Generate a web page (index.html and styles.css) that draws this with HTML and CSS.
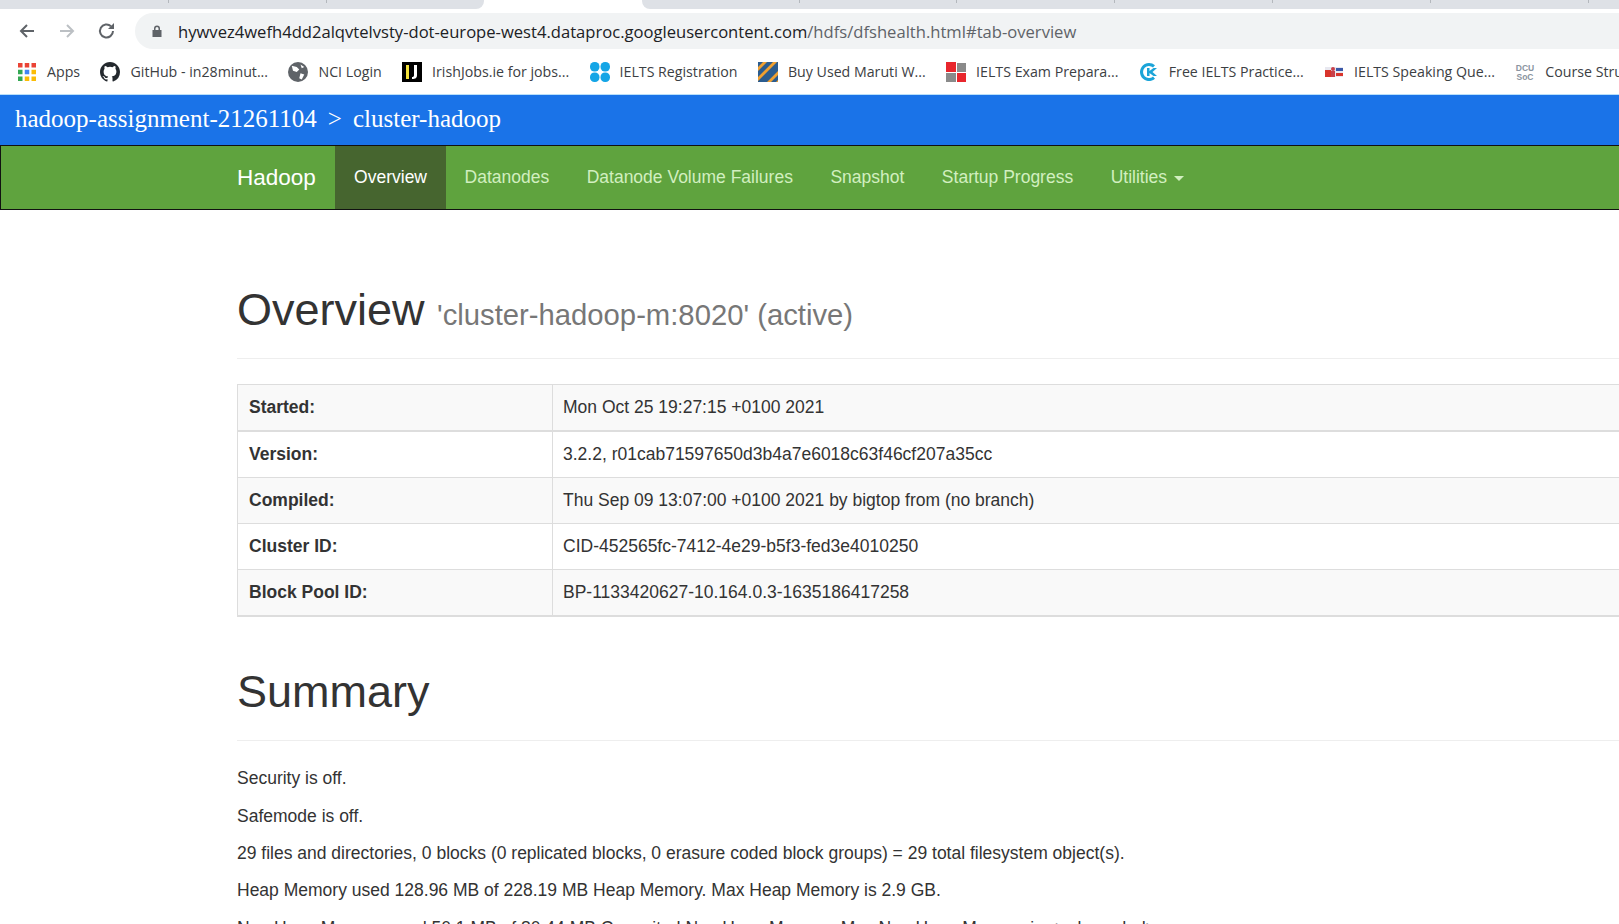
FILE: index.html
```html
<!DOCTYPE html>
<html lang="en">
<head>
    <meta charset="UTF-8">
    <title>Namenode information</title>
    <link rel="stylesheet" href="styles.css">
</head>
<body>

    <!-- Tab strip -->
    <div class="tabstrip">
        <div class="tab-gray tab-left">
            <span class="tab-sep"></span><span class="tab-sep"></span>
        </div>
        <div class="tab-active"></div>
        <div class="tab-gray tab-right">
            <span class="tab-sep"></span><span class="tab-sep"></span><span class="tab-sep"></span>
            <span class="tab-sep"></span><span class="tab-sep"></span><span class="tab-sep"></span>
        </div>
    </div>

    <!-- Address bar -->
    <div class="toolbar">
        <svg class="nav-icon" viewBox="0 0 20 20"><path d="M17 10H4M10 4l-6 6 6 6" fill="none" stroke="#5f6368" stroke-width="2"/></svg>
        <svg class="nav-icon" viewBox="0 0 20 20"><path d="M3 10h13M10 4l6 6-6 6" fill="none" stroke="#bcc0c4" stroke-width="2"/></svg>
        <svg class="nav-icon" viewBox="0 0 20 20"><path d="M16 10a6.5 6.5 0 1 1-2-4.700" fill="none" stroke="#5f6368" stroke-width="2"/><path d="M17 2v6h-6z" fill="#5f6368"/></svg>
        <div class="omnibox">
            <svg class="lock" viewBox="0 0 12 14"><path d="M3 6V4.500a3 3 0 0 1 6 0V6h1.500v7h-9V6zM4.500 6h3V4.500a1.500 1.500 0 0 0-3 0z" fill="#5f6368"/></svg>
            <span class="url">hywvez4wefh4dd2alqvtelvsty-dot-europe-west4.dataproc.googleusercontent.com<span class="url-path">/hdfs/dfshealth.html#tab-overview</span></span>
        </div>
    </div>

    <!-- Bookmarks -->
    <div class="bookmarks">
        <a class="bookmark">
            <svg class="fav fav-apps" viewBox="0 0 16 16">
                <rect x="0" y="0" width="4" height="4" fill="#ea4335"/><rect x="6" y="0" width="4" height="4" fill="#ea4335"/><rect x="12" y="0" width="4" height="4" fill="#ea4335"/>
                <rect x="0" y="6" width="4" height="4" fill="#34a853"/><rect x="6" y="6" width="4" height="4" fill="#4285f4"/><rect x="12" y="6" width="4" height="4" fill="#fbbc05"/>
                <rect x="0" y="12" width="4" height="4" fill="#34a853"/><rect x="6" y="12" width="4" height="4" fill="#fbbc05"/><rect x="12" y="12" width="4" height="4" fill="#fbbc05"/>
            </svg>Apps</a>
        <a class="bookmark">
            <svg class="fav" viewBox="0 0 16 16"><path d="M8 0C3.600 0 0 3.600 0 8c0 3.500 2.300 6.500 5.500 7.600.4.100.5-.2.500-.4v-1.400c-2.200.5-2.700-1-2.700-1-.4-.9-.9-1.200-.9-1.200-.7-.5.100-.5.100-.5.800.1 1.200.8 1.200.8.700 1.200 1.900.9 2.300.7.100-.5.300-.9.500-1.100-1.800-.2-3.600-.9-3.600-4 0-.9.300-1.600.8-2.100-.1-.2-.4-1 .1-2.100 0 0 .7-.2 2.200.8a7.600 7.600 0 0 1 4 0c1.500-1 2.200-.8 2.200-.8.500 1.100.2 1.900.1 2.100.5.600.8 1.300.8 2.100 0 3.100-1.900 3.700-3.700 3.900.3.300.6.800.6 1.500v2.200c0 .2.100.5.600.4A8 8 0 0 0 16 8c0-4.400-3.600-8-8-8z" fill="#24292e"/></svg>GitHub - in28minut...</a>
        <a class="bookmark">
            <svg class="fav" viewBox="0 0 16 16"><circle cx="8" cy="8" r="8" fill="#5f6368"/><path d="M3 3l4 1 2 2-2 2-3-1zM10 9l3 1-2 4-2-1zM10 2l3 2-2 1z" fill="#fff"/></svg>NCI Login</a>
        <a class="bookmark">
            <svg class="fav" viewBox="0 0 20 20"><rect width="20" height="20" fill="#000"/><path d="M4 3h3v14H4z" fill="#f5e33b"/><path d="M12 3h3v10c0 3-1.500 4-5 4v-2c1.500 0 2-.5 2-2z" fill="#fff"/></svg>IrishJobs.ie for jobs...</a>
        <a class="bookmark">
            <svg class="fav" viewBox="0 0 20 20"><g fill="#14a5e6"><rect x="0" y="0" width="9.500" height="9.500" rx="4.500"/><rect x="10.500" y="0" width="9.500" height="9.500" rx="4.500"/><rect x="0" y="10.500" width="9.500" height="9.500" rx="4.500"/><rect x="10.500" y="10.500" width="9.500" height="9.500" rx="4.500"/></g></svg>IELTS Registration</a>
        <a class="bookmark">
            <svg class="fav" viewBox="0 0 20 20"><rect width="20" height="20" fill="#2b5c8f"/><path d="M0 5L5 0h4L0 9zM0 15L15 0h4L0 19zM9 20L20 9v4l-7 7zM18 20l2-2v2z" fill="#f0a030"/></svg>Buy Used Maruti W...</a>
        <a class="bookmark">
            <svg class="fav" viewBox="0 0 20 20"><rect x="0" y="0" width="10" height="10" fill="#e8262d"/><rect x="11" y="1" width="9" height="9" fill="#8a8a8a"/><rect x="0" y="11" width="10" height="9" fill="#8a8a8a"/><rect x="11" y="11" width="9" height="9" fill="#e8262d"/></svg>IELTS Exam Prepara...</a>
        <a class="bookmark">
            <svg class="fav" viewBox="0 0 20 20"><path d="M10 1a9 9 0 1 0 6 15.700l-2-2.200A6 6 0 1 1 14 5.500l2-2.200A9 9 0 0 0 10 1z" fill="#1ba4d8"/><path d="M8 6h2.500v3l4-3H18l-4.500 4 4.500 4h-3.500l-4-3v3H8z" fill="#1ba4d8"/></svg>Free IELTS Practice...</a>
        <a class="bookmark">
            <svg class="fav" viewBox="0 0 20 20"><rect x="1" y="5" width="18" height="10" fill="#e8e8f0"/><rect x="1" y="8" width="6" height="7" fill="#d8342c"/><circle cx="9" cy="7" r="2" fill="#c8404a"/><rect x="7" y="9" width="4" height="6" fill="#c8404a"/><rect x="12" y="6" width="7" height="3" fill="#3a58a8"/><rect x="12" y="11" width="7" height="3" fill="#d8342c"/></svg>IELTS Speaking Que...</a>
        <a class="bookmark">
            <svg class="fav" viewBox="0 0 20 20"><text class="dcu-text" x="10" y="9">DCU</text><text class="dcu-text" x="10" y="18">SoC</text></svg>Course Stru</a>
    </div>

    <!-- Dataproc header -->
    <div class="project-bar">hadoop-assignment-21261104<span class="crumb-sep">&gt;</span>cluster-hadoop</div>

    <!-- Navbar -->
    <nav class="navbar">
        <a class="brand">Hadoop</a>
        <a class="nav-link active">Overview</a>
        <a class="nav-link">Datanodes</a>
        <a class="nav-link">Datanode Volume Failures</a>
        <a class="nav-link">Snapshot</a>
        <a class="nav-link">Startup Progress</a>
        <a class="nav-link">Utilities <span class="caret"></span></a>
    </nav>

    <!-- Page content -->
    <div class="container">
        <div class="page-header">
            <h1>Overview <small>'cluster-hadoop-m:8020' (active)</small></h1>
        </div>

        <table class="info-table">
            <tr class="first-row"><th>Started:</th><td>Mon Oct 25 19:27:15 +0100 2021</td></tr>
            <tr><th>Version:</th><td>3.2.2, r01cab71597650d3b4a7e6018c63f46cf207a35cc</td></tr>
            <tr><th>Compiled:</th><td>Thu Sep 09 13:07:00 +0100 2021 by bigtop from (no branch)</td></tr>
            <tr><th>Cluster ID:</th><td>CID-452565fc-7412-4e29-b5f3-fed3e4010250</td></tr>
            <tr><th>Block Pool ID:</th><td>BP-1133420627-10.164.0.3-1635186417258</td></tr>
        </table>

        <div class="page-header">
            <h1>Summary</h1>
        </div>

        <p>Security is off.</p>
        <p>Safemode is off.</p>
        <p>29 files and directories, 0 blocks (0 replicated blocks, 0 erasure coded block groups) = 29 total filesystem object(s).</p>
        <p>Heap Memory used 128.96 MB of 228.19 MB Heap Memory. Max Heap Memory is 2.9 GB.</p>
        <p>Non Heap Memory used 50.1 MB of 80.44 MB Commited Non Heap Memory. Max Non Heap Memory is &lt;unbounded&gt;.</p>
    </div>

</body>
</html>
```

FILE: styles.css
```css
/* Page */
html, body {
    height: 924px;
    overflow: hidden;
}

body {
    margin: 0;
    background-color: white;
    color: #333;
    font-family: 'Liberation Sans', Arial, sans-serif;
    font-size: 17.5px;
}

/* Tab strip */
.tabstrip {
    display: flex;
    height: 9px;
    background-color: white;
}

.tab-gray {
    display: flex;
    background-color: #dee1e6;
}

.tab-left {
    flex: 0 0 483px;
    border-bottom-right-radius: 8px;
    padding-left: 168px;
    box-sizing: border-box;
}

.tab-active {
    flex: 0 0 158px;
}

.tab-right {
    flex: 1;
    min-width: 0;
    overflow: hidden;
    border-bottom-left-radius: 8px;
    padding-left: 157px;
}

.tab-sep {
    flex-shrink: 0;
    width: 1px;
    height: 3px;
    margin-right: 156.8px;
    background-color: #b4b8bd;
}

/* Address bar */
.toolbar {
    display: flex;
    align-items: center;
    height: 36px;
    margin-top: 4px;
    padding-left: 17px;
}

.nav-icon {
    width: 20px;
    height: 20px;
    margin-right: 20px;
}

.omnibox {
    display: flex;
    flex: 1;
    align-items: center;
    height: 36px;
    margin-left: -2px;
    padding-left: 16px;
    background-color: #f1f3f4;
    border-radius: 18px 0 0 18px;
}

.lock {
    width: 12px;
    height: 14px;
    margin-right: 15px;
}

.url {
    font-family: 'Open Sans', sans-serif;
    font-size: 16.6px;
    color: #202124;
    white-space: nowrap;
}

.url-path {
    color: #5f6368;
}

/* Bookmarks */
.bookmarks {
    display: flex;
    align-items: center;
    gap: 20.4px;
    height: 45px;
    padding-left: 18px;
    overflow: hidden;
    border-bottom: 1px solid #b8dffa;
    font-family: 'Open Sans', sans-serif;
    font-size: 14.2px;
    color: #3c4043;
    white-space: nowrap;
}

.bookmark {
    display: flex;
    align-items: center;
    flex-shrink: 0;
}

.fav {
    width: 20px;
    height: 20px;
    margin-right: 10px;
}

.fav-apps {
    width: 18px;
    height: 18px;
    margin-right: 11px;
}

.dcu-text {
    fill: #8a94a0;
    font-family: 'Liberation Sans', Arial, sans-serif;
    font-size: 8.5px;
    font-weight: bold;
    text-anchor: middle;
}

/* Dataproc header */
.project-bar {
    height: 50px;
    padding-left: 15px;
    background-color: #1a73e8;
    color: white;
    font-family: 'Liberation Serif', serif;
    font-size: 25px;
    line-height: 48px;
    white-space: nowrap;
}

.crumb-sep {
    margin: 0 11px;
}

/* Navbar */
.navbar {
    display: flex;
    height: 65px;
    padding-left: 217px;
    background-color: #5fa33e;
    border: 1px solid #111;
    border-right: none;
    box-sizing: border-box;
}

.brand {
    padding: 0 19.5px 0 19px;
    color: white;
    font-size: 22.5px;
    line-height: 63px;
}

.nav-link {
    padding: 0 18.75px;
    color: #d2efc0;
    line-height: 63px;
}

.nav-link.active {
    background-color: #46652f;
    color: white;
}

.caret {
    display: inline-block;
    margin-left: 2.5px;
    vertical-align: middle;
    border-top: 5px solid #d2efc0;
    border-left: 5px solid transparent;
    border-right: 5px solid transparent;
}

/* Page content */
.container {
    width: 1500px;
    margin-left: 237px;
    padding-top: 25px;
}

.page-header {
    margin: 50px 0 25px;
    padding-bottom: 11.25px;
    border-bottom: 1px solid #eee;
}

h1 {
    margin: 0 0 12.5px;
    font-size: 45px;
    font-weight: 500;
    line-height: 1.1;
}

h1 small {
    font-size: 29.25px;
    font-weight: normal;
    line-height: 1;
    color: #777;
}

/* Info table */
.info-table {
    width: 100%;
    border-collapse: collapse;
    border: 1px solid #ddd;
    border-bottom: 2px solid #ddd;
}

.info-table th,
.info-table td {
    height: 46.25px;
    padding: 0 10px;
    border: 1px solid #ddd;
    text-align: left;
    box-sizing: border-box;
}

.info-table th {
    width: 315px;
    padding-left: 11px;
    font-weight: bold;
}

.info-table tr:nth-child(odd) {
    background-color: #f9f9f9;
}

.info-table .first-row th,
.info-table .first-row td {
    border-bottom-width: 2px;
}

p {
    margin: 0 0 12.4px;
    line-height: 25px;
}
```
